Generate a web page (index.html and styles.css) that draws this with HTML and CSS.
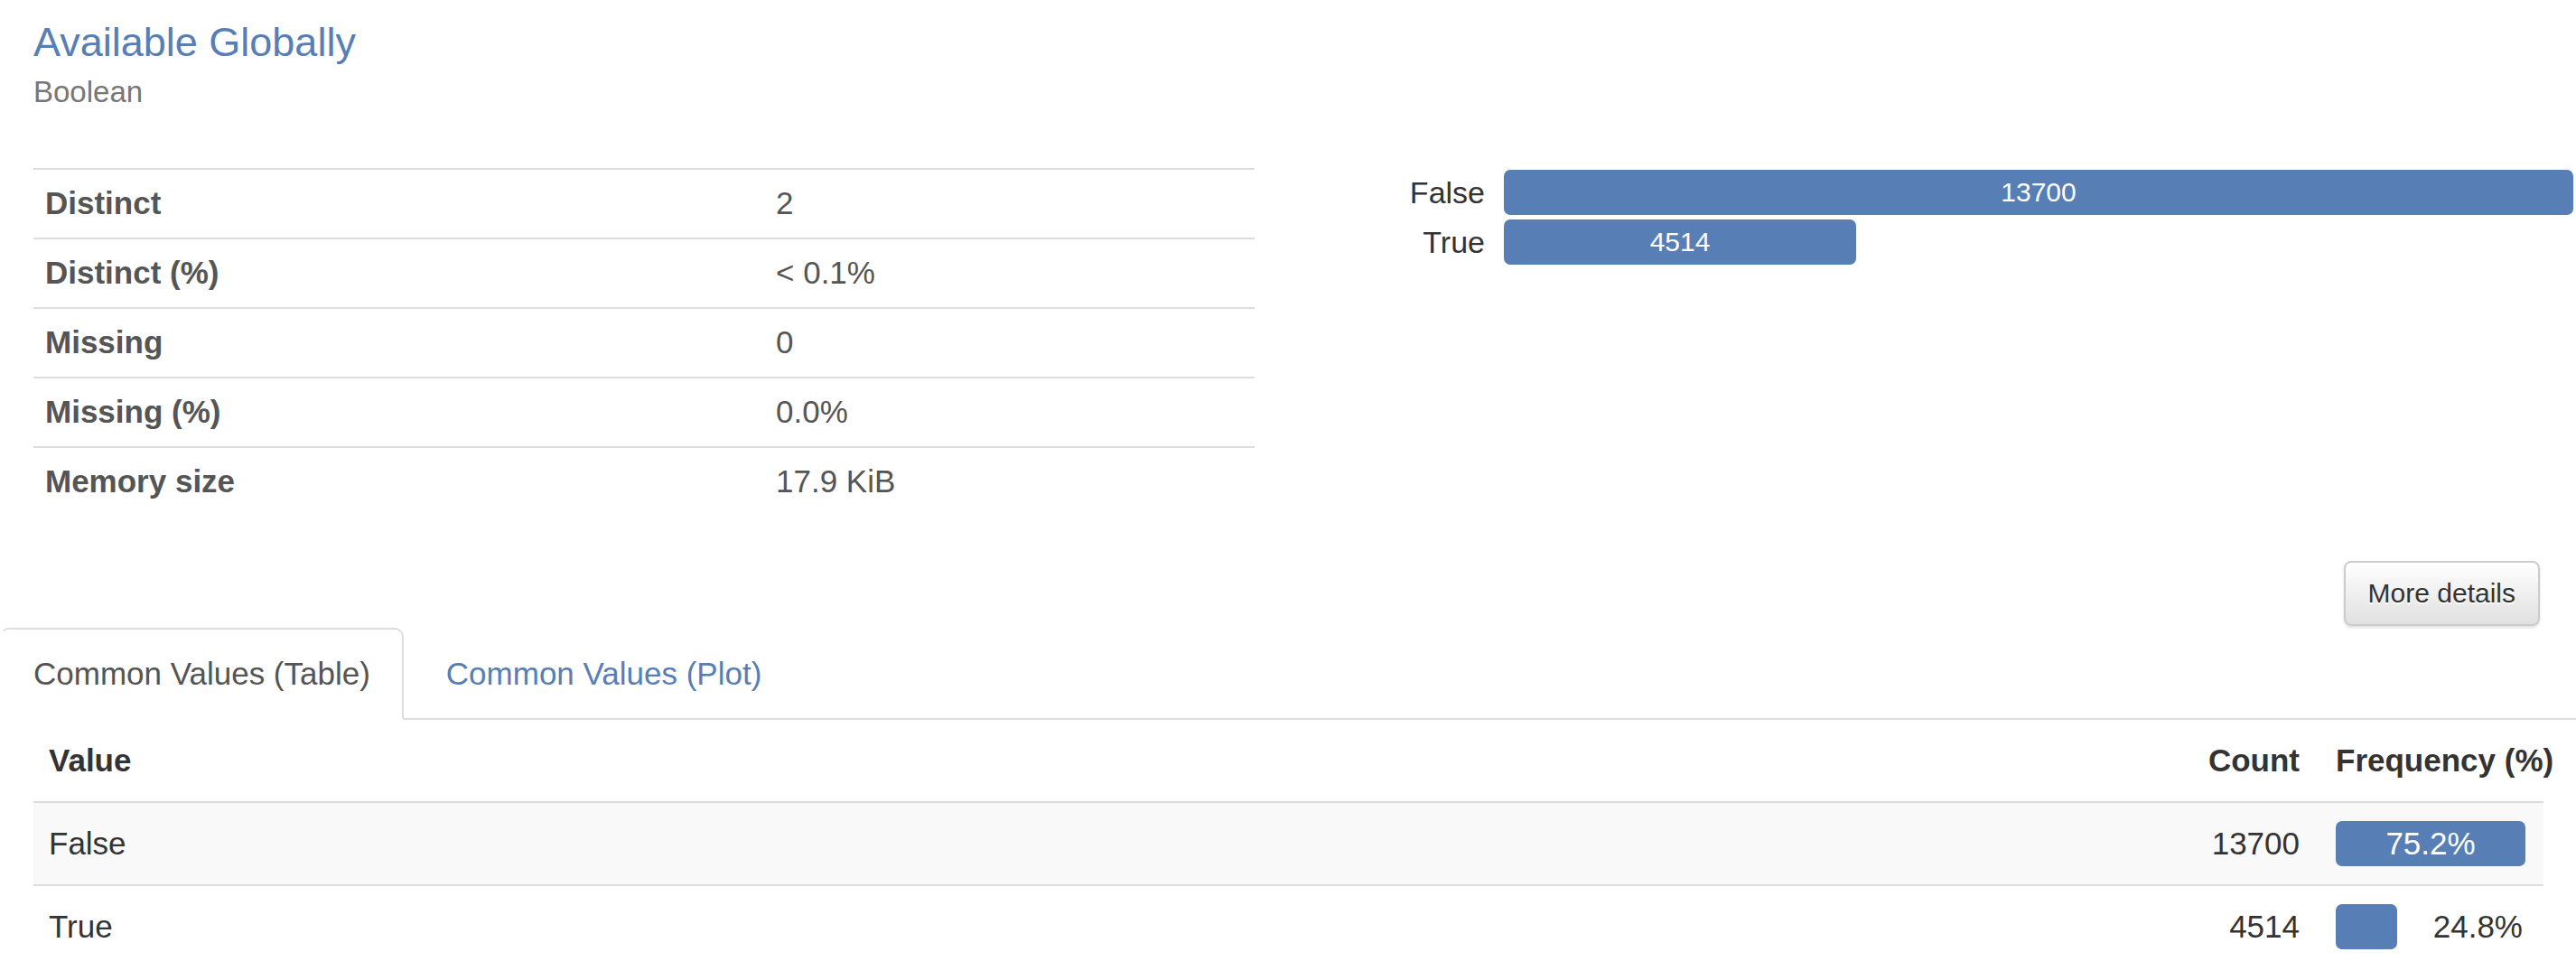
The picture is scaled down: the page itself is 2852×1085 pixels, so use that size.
FILE: index.html
```html
<!DOCTYPE html>
<html>
<head>
<meta charset="utf-8">
<link rel="stylesheet" href="styles.css">
</head>
<body>
<div class="variable">
  <div class="top-row">
    <div class="info-col">
      <a class="title">Available Globally</a>
      <div class="subtitle">Boolean</div>
      <table class="stats">
        <colgroup><col class="stats-label"><col></colgroup>
        <tr><th>Distinct</th><td>2</td></tr>
        <tr><th>Distinct (%)</th><td>&lt; 0.1%</td></tr>
        <tr><th>Missing</th><td>0</td></tr>
        <tr><th>Missing (%)</th><td>0.0%</td></tr>
        <tr><th>Memory size</th><td>17.9 KiB</td></tr>
      </table>
    </div>
    <div class="chart-col">
      <div class="bar-chart">
        <div class="bar-label">False</div>
        <div class="bar-track"><div class="bar" style="width:100%">13700</div></div>
        <div class="bar-label">True</div>
        <div class="bar-track"><div class="bar" style="width:32.95%">4514</div></div>
      </div>
    </div>
  </div>
  <div class="actions">
    <button class="btn">More details</button>
  </div>
  <div class="tabs">
    <ul class="nav">
      <li class="tab active"><a>Common Values (Table)</a></li>
      <li class="tab"><a>Common Values (Plot)</a></li>
    </ul>
    <div class="pane">
      <table class="freq">
        <colgroup><col><col class="count-col"><col class="freq-col"></colgroup>
        <thead>
          <tr><th class="value">Value</th><th class="num">Count</th><th class="fq">Frequency (%)</th></tr>
        </thead>
        <tbody>
          <tr class="odd"><td class="value">False</td><td class="num">13700</td>
            <td class="fq"><div class="fq-cell"><div class="fq-bar inside" style="width:210px">75.2%</div></div></td></tr>
          <tr><td class="value">True</td><td class="num">4514</td>
            <td class="fq"><div class="fq-cell"><div class="fq-bar" style="width:68px"></div><span class="fq-text">24.8%</span></div></td></tr>
        </tbody>
      </table>
    </div>
  </div>
</div>
</body>
</html>
```
FILE: styles.css
```css
* { box-sizing: border-box; }
html, body { margin: 0; padding: 0; background: #fff; }
body {
  font-family: "Liberation Sans", Arial, Helvetica, sans-serif;
  font-size: 35px;
  line-height: 50px;
  color: #333;
  width: 2852px;
  overflow: hidden;
}

.top-row { display: flex; }
.info-col { width: 1426px; padding: 0 37px 0 37px; }
.chart-col { width: 1426px; }

.title {
  display: block;
  margin-top: 22px;
  font-size: 45px;
  line-height: 50px;
  color: #577eb5;
  text-decoration: none;
}
.subtitle {
  margin-top: 10px;
  font-size: 33px;
  line-height: 40px;
  color: #777;
}

.stats {
  margin-top: 64px;
  width: 100%;
  border-collapse: collapse;
  table-layout: fixed;
  color: #555;
}
.stats-label { width: 809px; }
.stats th, .stats td {
  text-align: left;
  padding: 12px 13px 13px 13px;
  line-height: 50px;
  border-top: 2px solid #ddd;
  vertical-align: top;
}
.stats th { font-weight: bold; }

.bar-chart {
  margin-top: 188px;
  display: grid;
  grid-template-columns: 218px 1184px;
  column-gap: 21px;
  row-gap: 5px;
}
.bar-label {
  text-align: right;
  font-size: 34px;
  line-height: 50px;
  color: #333;
}
.bar-track { height: 50px; }
.bar {
  height: 50px;
  background: #577eb5;
  border-radius: 7px;
  color: #fff;
  font-size: 30px;
  line-height: 50px;
  text-align: center;
}

.actions {
  margin-top: 50px;
  text-align: right;
  padding-right: 40px;
}
.btn {
  font-family: "Liberation Sans", Arial, Helvetica, sans-serif;
  font-size: 30px;
  line-height: 45px;
  padding: 11px 25px 12px;
  border: 2px solid #ccc;
  border-radius: 8px;
  color: #333;
  background: linear-gradient(to bottom, #fff 0%, #e0e0e0 100%);
  text-shadow: 0 2px 0 #fff;
  box-shadow: 0 2px 3px rgba(0,0,0,0.12);
  margin: 0;
}

.tabs { margin-top: 2px; }
.nav {
  list-style: none;
  margin: 0;
  padding: 0;
  display: flex;
  border-bottom: 2px solid #ddd;
}
.tab { margin-bottom: -2px; margin-right: 10px; }
.tab a {
  display: block;
  padding: 24px 35px;
  line-height: 50px;
  border: 2px solid transparent;
  border-radius: 10px 10px 0 0;
  color: #577eb5;
}
.tab.active a {
  color: #555;
  background: #fff;
  border-color: #ddd;
  border-bottom-color: transparent;
  border-left-color: transparent;
}

.pane { padding: 0 36px 0 37px; }
.freq {
  width: 100%;
  border-collapse: collapse;
  table-layout: fixed;
  color: #333;
}
.count-col { width: 186px; }
.freq-col { width: 250px; }
.freq th, .freq td {
  padding: 20px;
  line-height: 50px;
  text-align: left;
  vertical-align: top;
  white-space: nowrap;
}
.freq th.value, .freq td.value { padding-left: 17px; }
.freq th { font-weight: bold; border-bottom: 2px solid #ddd; }
.freq td { border-top: 2px solid #ddd; }
.freq tbody tr:first-child td { border-top: 0; }
.freq .num { text-align: right; }
.freq th.fq { overflow: visible; }
.freq tr.odd td { background: #f9f9f9; }
.fq-cell { display: flex; align-items: center; height: 50px; }
.fq-bar {
  height: 50px;
  background: #577eb5;
  border-radius: 7px;
  flex: none;
}
.fq-bar.inside { color: #fff; text-align: center; line-height: 50px; }
.fq-text { margin-left: auto; padding-right: 3px; }
```
